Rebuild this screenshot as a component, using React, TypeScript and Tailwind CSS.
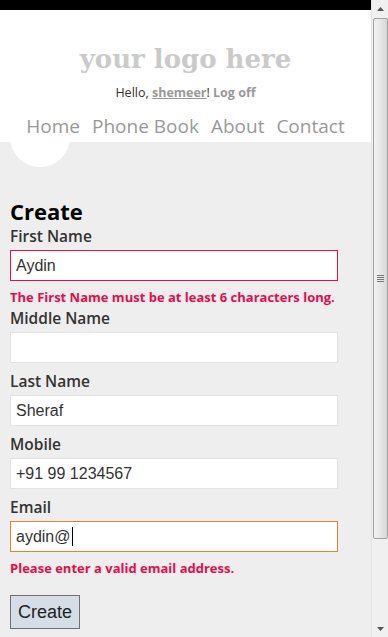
import React from "react";

const sans = { fontFamily: '"Open Sans", "Noto Sans", sans-serif' };

function Field({ label, value, error, invalid, focus }: { label: string; value: string; error?: string; invalid?: boolean; focus?: boolean }) {
  return (
    <div className="flex flex-col">
      <label className="h-[20px] leading-[20px] text-[15.5px] font-semibold text-[#333]">{label}</label>
      <div
        className={`mt-[4px] h-[31px] w-[328px] bg-white border flex items-center pl-[5px] text-[16px] text-[#333] ${
          invalid ? "border-[#e80c4d]" : focus ? "border-[#e8822e]" : "border-[#e2e2e2]"
        }`}
        style={{ fontFamily: '"Liberation Sans", Arial, sans-serif' }}
      >
        <span>{value}</span>
        {focus && <span className="w-px h-[19px] bg-black ml-px" />}
      </div>
      {error && (
        <p className="mt-[8px] h-[16px] leading-[16px] text-[13px] font-bold text-[#e80c4d] whitespace-nowrap">{error}</p>
      )}
    </div>
  );
}

function Scrollbar() {
  return (
    <div className="w-[17px] h-[637px] bg-[#f0f0f0] border-l border-[#e4e4e4] flex flex-col items-center shrink-0">
      <div className="h-[17px] w-full flex items-center justify-center">
        <svg width="7" height="4" viewBox="0 0 7 4"><path d="M3.5 0 L7 4 L0 4 Z" fill="#555" /></svg>
      </div>
      <div className="mt-px h-[521px] w-[15px] rounded-[2px] border border-[#a2a2a2] bg-gradient-to-r from-[#f2f2f2] via-[#e6e6e6] to-[#d6d6d6] flex items-center justify-center">
        <div className="flex flex-col gap-[1px]">
          <div className="w-[7px] h-px bg-[#777]" />
          <div className="w-[7px] h-px bg-[#777]" />
          <div className="w-[7px] h-px bg-[#777]" />
          <div className="w-[7px] h-px bg-[#777]" />
        </div>
      </div>
      <div className="flex-1" />
      <div className="h-[17px] w-full flex items-center justify-center">
        <svg width="7" height="4" viewBox="0 0 7 4"><path d="M0 0 L7 0 L3.5 4 Z" fill="#555" /></svg>
      </div>
    </div>
  );
}

export default function App() {
  return (
    <div className="flex w-[388px] h-[637px] overflow-hidden bg-[#eeeeee]" style={sans}>
      <div className="relative flex-1 flex flex-col">
        <div className="h-[10px] bg-black" />

        {/* decorative circle under the nav */}
        <div className="absolute left-[10px] top-[107px] w-[60px] h-[60px] rounded-full bg-white" />

        {/* HEADER */}
        <header className="h-[132px] bg-white flex flex-col items-center">
          <div
            className="relative mt-[31px] h-[36px] leading-[36px] text-[26px] font-bold text-[#cacaca]"
            style={{ fontFamily: '"DejaVu Serif", serif' }}
          >
            your logo here
          </div>
          <div className="relative mt-[8px] h-[16px] leading-[16px] text-[12.5px] text-[#333]">
            Hello, <a className="font-bold text-[#999] underline">shemeer</a>!{" "}
            <a className="font-bold text-[#999]">Log off</a>
          </div>
          <nav className="relative mt-[13px] h-[24px] leading-[24px] text-[19px] text-[#999] flex gap-[12px]">
            <a>Home</a>
            <a>Phone Book</a>
            <a>About</a>
            <a>Contact</a>
          </nav>
        </header>

        {/* MAIN */}
        <main className="relative pl-[10px] pt-[55px] flex flex-col">
          <h2 className="h-[28px] leading-[28px] text-[22px] font-bold text-black">Create</h2>
          <div className="mt-px">
            <Field label="First Name" value="Aydin" invalid error="The First Name must be at least 6 characters long." />
          </div>
          <div className="mt-[3px] flex flex-col gap-[8px]">
            <Field label="Middle Name" value="" />
            <Field label="Last Name" value="Sheraf" />
            <Field label="Mobile" value="+91 99 1234567" />
            <Field label="Email" value="aydin@" focus error="Please enter a valid email address." />
          </div>
          <button
            className="mt-[19px] w-[70px] h-[34px] bg-[#d5dee5] border border-[#707070] text-[18px] text-[#222]"
            style={{ fontFamily: '"Liberation Sans", Arial, sans-serif' }}
          >
            Create
          </button>
        </main>
      </div>
      <Scrollbar />
    </div>
  );
}
